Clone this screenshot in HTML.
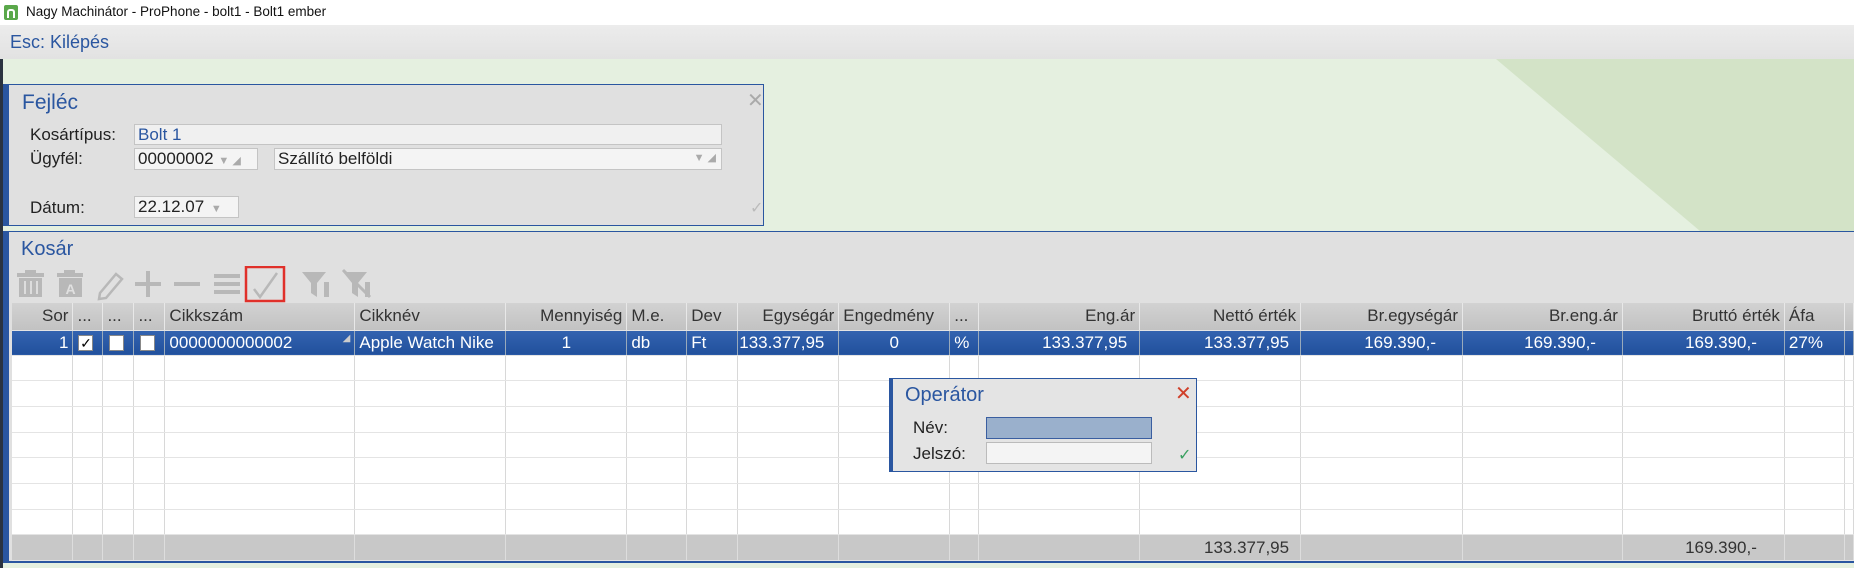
<!DOCTYPE html>
<html><head><meta charset="utf-8">
<style>
*{margin:0;padding:0;box-sizing:border-box}
body{width:1854px;height:568px;overflow:hidden;position:relative;background:#e5f0e0;font-family:"Liberation Sans Narrow","Liberation Sans",sans-serif;font-size:17px;color:#222}
.abs{position:absolute}
.title{left:0;top:0;width:1854px;height:25px;background:#fff;font-family:"Liberation Sans",sans-serif;font-size:13.5px;line-height:24px;padding-left:26px;color:#111}
.menu{left:0;top:25px;width:1854px;height:34px;background:linear-gradient(#ececec,#e2e2e2);color:#2a56a0;font-size:18px;line-height:34px;padding-left:10px}
.panel{background:#e0e0e0;border:1px solid #2a56a0;border-left:6px solid #2a56a0}
.ptitle{color:#2a56a0;font-size:21px}
.lbl{font-size:17px;color:#222}
.inp{background:#f0f0f0;border:1px solid #c4c4c4;font-size:17px;line-height:19px;padding-left:3px}
table{border-collapse:collapse;table-layout:fixed;position:absolute;left:12px;top:303px}
td{height:25.7px;border-right:1px solid #d8d8d8;border-bottom:1px solid #e4e4e4;padding:0 4px;white-space:nowrap;overflow:hidden;font-size:17px;background:#fff}
tr.h td{height:27px;background:linear-gradient(#d2d2d2,#c2c2c2);border-right:1px solid #e8e8e8;color:#333}
tr.s td{background:linear-gradient(#3363b0,#21509c);color:#fff;border-right:1px solid #9ab;height:25px}
tr.f td{background:#c8c8c8;border-right:1px solid #ddd;color:#333;height:26px}
.r{text-align:right}.c{text-align:center}
.cb{display:inline-block;width:15px;height:16px;background:#fff;border:1px solid #888;vertical-align:middle;color:#000;font-size:14px;line-height:14px;text-align:center}
</style></head><body>
<div class="abs title">Nagy Machinátor - ProPhone - bolt1 - Bolt1 ember</div>
<div class="abs" style="left:4px;top:5px;width:14px;height:15px;background:#5aa84a;border-radius:2px"><div style="position:absolute;left:3px;top:4px;width:8px;height:9px;border:2px solid #fff;border-bottom:none;border-radius:3px 3px 0 0"></div></div>
<div class="abs menu">Esc: Kilépés</div>
<div class="abs" style="left:0;top:59px;width:3px;height:509px;background:#2a3340"></div>
<svg class="abs" style="left:0;top:59px" width="1854" height="172"><polygon points="1496,0 1854,0 1854,172 1700,172" fill="#d3e3c7"/></svg>

<div class="abs panel" style="left:3px;top:84px;width:761px;height:142px">
<div class="abs ptitle" style="left:13px;top:6px">Fejléc</div>
<div class="abs" style="left:738px;top:3px;color:#aaa;font-size:20px;font-family:'Liberation Sans',sans-serif">✕</div>
<div class="abs lbl" style="left:21px;top:40px">Kosártípus:</div>
<div class="abs inp" style="left:125px;top:39px;width:588px;height:21px;color:#2a56a0">Bolt 1</div>
<div class="abs lbl" style="left:21px;top:64px">Ügyfél:</div>
<div class="abs inp" style="left:125px;top:63px;width:124px;height:22px;background:#f4f4f4">00000002 <span style="color:#aaa;font-size:11px">▼ ◢</span></div>
<div class="abs inp" style="left:265px;top:63px;width:448px;height:22px;background:#f4f4f4">Szállító belföldi<span style="position:absolute;right:5px;color:#aaa;font-size:11px">▼ ◢</span></div>
<div class="abs lbl" style="left:21px;top:113px">Dátum:</div>
<div class="abs inp" style="left:125px;top:111px;width:105px;height:22px;background:#f4f4f4">22.12.07 <span style="color:#aaa;font-size:11px;margin-left:2px">▼</span></div>
<div class="abs" style="left:741px;top:113px;color:#bbb;font-size:16px">✓</div>
</div>

<div class="abs panel" style="left:3px;top:231px;width:1851px;height:332px;border-right:none;border-bottom:2px solid #2a56a0">
<div class="abs ptitle" style="left:12px;top:6px;font-size:20px">Kosár</div>
</div>
<svg class="abs" style="left:0;top:266px" width="420" height="37" fill="#b8b8b8" stroke="none">
<rect x="17" y="7" width="27" height="4"/><rect x="25" y="4" width="11" height="3"/><rect x="19" y="12" width="23" height="19"/>
<g fill="#ddd"><rect x="24" y="15" width="2" height="13"/><rect x="30" y="15" width="2" height="13"/><rect x="36" y="15" width="2" height="13"/></g>
<rect x="57" y="7" width="26" height="4"/><rect x="64" y="4" width="11" height="3"/><rect x="59" y="12" width="23" height="19"/>
<text x="70.5" y="28" fill="#e0e0e0" font-size="14" font-family="Liberation Sans" text-anchor="middle" font-weight="bold">A</text>
<path d="M100 27 L116 8 L122 13 L106 32 L99 33 Z" fill="none" stroke="#b8b8b8" stroke-width="2.5"/>
<rect x="135" y="16" width="26" height="4"/><rect x="146" y="5" width="4" height="26"/>
<rect x="174" y="16" width="26" height="4"/>
<rect x="214" y="8" width="26" height="4"/><rect x="214" y="16" width="26" height="4"/><rect x="214" y="24" width="26" height="4"/>
<rect x="246" y="1" width="38" height="34" fill="none" stroke="#e0302a" stroke-width="2.5"/>
<path d="M254 23 L260 31 L277 7" fill="none" stroke="#b8b8b8" stroke-width="2.5"/>
<path d="M302 6 L326 6 L317 17 L317 31 L311 27 L311 17 Z"/><rect x="324" y="16" width="5" height="15"/>
<path d="M343 6 L367 6 L358 17 L358 31 L352 27 L352 17 Z"/><path d="M343 4 L370 31" stroke="#b8b8b8" stroke-width="3"/><rect x="365" y="16" width="5" height="15"/>
</svg>

<table>
<colgroup><col style="width:61px"><col style="width:30px"><col style="width:31px"><col style="width:31px"><col style="width:190px"><col style="width:151px"><col style="width:121px"><col style="width:60px"><col style="width:51px"><col style="width:101px"><col style="width:111px"><col style="width:29px"><col style="width:161px"><col style="width:161px"><col style="width:162px"><col style="width:160px"><col style="width:162px"><col style="width:60px"><col style="width:9px"></colgroup>
<tr class="h"><td class="r">Sor</td><td>...</td><td>...</td><td>...</td><td>Cikkszám</td><td>Cikknév</td><td class="r">Mennyiség</td><td>M.e.</td><td>Dev</td><td class="r">Egységár</td><td>Engedmény</td><td>...</td><td class="r">Eng.ár</td><td class="r">Nettó érték</td><td class="r">Br.egységár</td><td class="r">Br.eng.ár</td><td class="r">Bruttó érték</td><td>Áfa</td><td></td></tr>
<tr class="s"><td class="r">1</td><td style="padding:0 5px"><span class="cb">✓</span></td><td style="padding:0 6px"><span class="cb"></span></td><td style="padding:0 6px"><span class="cb"></span></td><td>0000000000002<span style="float:right;font-size:10px;color:#ccc">◢</span></td><td>Apple Watch Nike</td><td class="c">1</td><td>db</td><td>Ft</td><td style="padding:0 1px">133.377,95</td><td class="c">0</td><td>%</td><td class="r" style="padding-right:12px">133.377,95</td><td class="r" style="padding-right:11px">133.377,95</td><td class="r" style="padding-right:26px">169.390,-</td><td class="r" style="padding-right:26px">169.390,-</td><td class="r" style="padding-right:27px">169.390,-</td><td>27%</td><td></td></tr>
<tr><td></td><td></td><td></td><td></td><td></td><td></td><td></td><td></td><td></td><td></td><td></td><td></td><td></td><td></td><td></td><td></td><td></td><td></td><td></td></tr>
<tr><td></td><td></td><td></td><td></td><td></td><td></td><td></td><td></td><td></td><td></td><td></td><td></td><td></td><td></td><td></td><td></td><td></td><td></td><td></td></tr>
<tr><td></td><td></td><td></td><td></td><td></td><td></td><td></td><td></td><td></td><td></td><td></td><td></td><td></td><td></td><td></td><td></td><td></td><td></td><td></td></tr>
<tr><td></td><td></td><td></td><td></td><td></td><td></td><td></td><td></td><td></td><td></td><td></td><td></td><td></td><td></td><td></td><td></td><td></td><td></td><td></td></tr>
<tr><td></td><td></td><td></td><td></td><td></td><td></td><td></td><td></td><td></td><td></td><td></td><td></td><td></td><td></td><td></td><td></td><td></td><td></td><td></td></tr>
<tr><td></td><td></td><td></td><td></td><td></td><td></td><td></td><td></td><td></td><td></td><td></td><td></td><td></td><td></td><td></td><td></td><td></td><td></td><td></td></tr>
<tr><td></td><td></td><td></td><td></td><td></td><td></td><td></td><td></td><td></td><td></td><td></td><td></td><td></td><td></td><td></td><td></td><td></td><td></td><td></td></tr>
<tr class="f"><td></td><td></td><td></td><td></td><td></td><td></td><td></td><td></td><td></td><td></td><td></td><td></td><td></td><td class="r" style="padding-right:11px">133.377,95</td><td></td><td></td><td class="r" style="padding-right:27px">169.390,-</td><td></td><td></td></tr>
</table>

<div class="abs panel" style="left:889px;top:378px;width:308px;height:94px;border-left-width:4px;background:#e4e4e4">
<div class="abs ptitle" style="left:12px;top:5px;font-size:20px">Operátor</div>
<div class="abs" style="left:282px;top:2px;color:#d0402a;font-size:20px;font-family:'Liberation Sans',sans-serif">✕</div>
<div class="abs lbl" style="left:20px;top:39px">Név:</div>
<div class="abs" style="left:93px;top:38px;width:166px;height:22px;background:#9ab0cc;border:1px solid #3a5ea0"></div>
<div class="abs lbl" style="left:20px;top:65px">Jelszó:</div>
<div class="abs" style="left:93px;top:63px;width:166px;height:22px;background:#f4f4f4;border:1px solid #bbb"></div>
<div class="abs" style="left:285px;top:66px;color:#3aa060;font-size:16px">✓</div>
</div>
</body></html>
